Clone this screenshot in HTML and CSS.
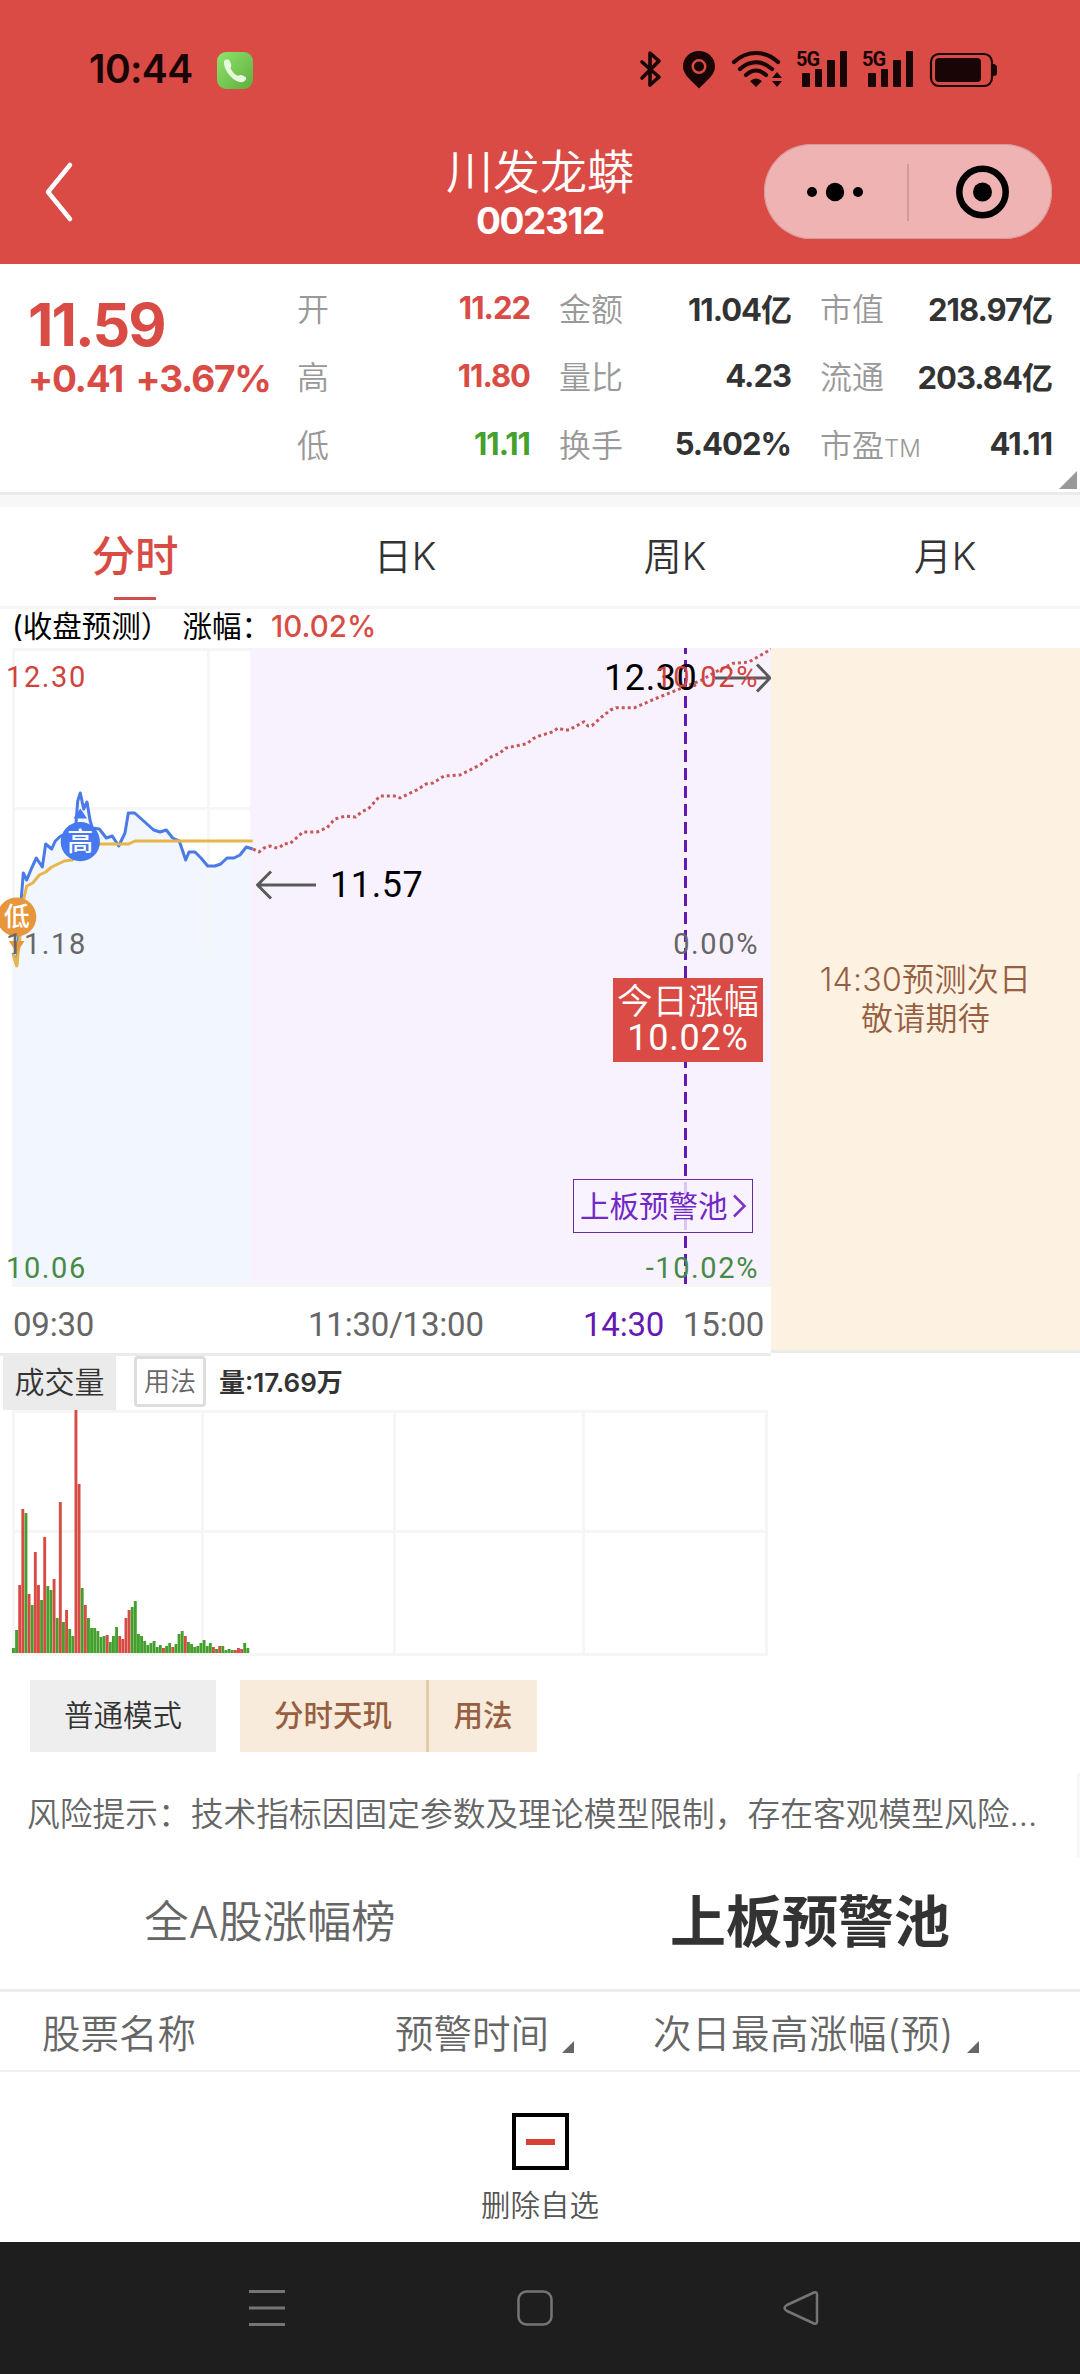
FILE: index.html
```html
<!DOCTYPE html>
<html lang="zh-CN">
<head>
    <meta charset="UTF-8">
    <meta name="viewport" content="width=device-width, initial-scale=1.0">
    <title>川发龙蟒 002312</title>
    <link rel="stylesheet" href="styles.css">
</head>
<body>
    <header class="header">
        <div class="status-bar">
            <span class="clock">10:44</span>
            <svg class="phone-icon" width="37" height="37" viewBox="0 0 37 37">
                <defs>
                    <linearGradient id="phoneBg" x1="0" y1="0" x2="1" y2="1">
                        <stop offset="0" stop-color="#8fe36b"/>
                        <stop offset="1" stop-color="#5fae3f"/>
                    </linearGradient>
                </defs>
                <rect width="36" height="37" rx="9" fill="url(#phoneBg)"/>
                <path d="M7 9.500c1-3 5-3 6 0 1 2.500 2 4 .5 6.500 1.500 4 4.500 6.500 7.500 8 2-1.500 4.500-1 6.500.5 2 .5 2 2 1 3.500-2 3-6 2.500-9 1C13 25.500 6.500 17 7 9.500z" fill="#e6f9df"/>
            </svg>
            <svg class="status-icons" width="360" height="40" viewBox="0 0 360 40" fill="#190505">
                <path d="M2 12l17 15-9 8V3l9 8L2 28" transform="translate(0 1)" fill="none" stroke="#190505" stroke-width="3.6" stroke-linejoin="round" stroke-linecap="round"/>
                <path fill-rule="evenodd" d="M59 2c9 0 16 6.500 16 15.500C75 26 67 31 59 39.500 51 31 43 26 43 17.500 43 8.500 50 2 59 2zm0 8a7.500 7.500 0 1 0 0 15 7.500 7.500 0 0 0 0-15z"/>
                <circle cx="59" cy="17.500" r="5"/>
                <g fill="none" stroke="#190505" stroke-width="4.200" stroke-linecap="round">
                    <path d="M94 13c13-12 31-12 44 0M100 20c10-9 22-9 32 0M106 26c7-6 13-6 20 0"/>
                </g>
                <path d="M110 32q6-5 12 0l-6 6zM132 29l5-6 5 6zM132 32h10l-5 6z"/>
                <g id="sig">
                    <text x="156" y="17" class="net">5G</text>
                    <rect x="162" y="24" width="8" height="14" rx="1"/>
                    <rect x="175" y="20" width="7" height="18" rx="1"/>
                    <rect x="187" y="11" width="8" height="27" rx="1"/>
                    <rect x="200" y="2" width="7" height="36" rx="1"/>
                </g>
                <use href="#sig" x="66"/>
                <rect x="291" y="5" width="61" height="32" rx="8" fill="none" stroke="#190505" stroke-width="2.200"/>
                <rect x="295" y="9" width="46" height="24" rx="4"/>
                <path d="M353 15c3 0 4 2 4 3v6c0 2-1 3-4 3z"/>
            </svg>
        </div>
        <div class="nav-bar">
            <svg class="back" width="40" height="64" viewBox="0 0 40 64" fill="none" stroke="#fff" stroke-width="4.500" stroke-linecap="round" stroke-linejoin="round">
                <path d="M30 5L8 32l22 27"/>
            </svg>
            <div class="title">
                <div class="stock-name">川发龙蟒</div>
                <div class="stock-code">002312</div>
            </div>
            <div class="capsule">
                <svg width="288" height="95" viewBox="0 0 288 95">
                    <circle cx="48" cy="48" r="5"/>
                    <circle cx="71" cy="48" r="9.200"/>
                    <circle cx="94" cy="48" r="5"/>
                    <path d="M144 20v57" stroke="#000" stroke-opacity=".17" stroke-width="1.500"/>
                    <circle cx="218.500" cy="48" r="23.200" fill="none" stroke="#000" stroke-width="6.500"/>
                    <circle cx="218.500" cy="48" r="9.500"/>
                </svg>
            </div>
        </div>
    </header>

    <section class="quote">
        <div class="price-box">
            <div class="price">11.59</div>
            <div class="change">+0.41 +3.67%</div>
        </div>
        <div class="stats">
            <div class="stat"><span>开</span><b class="up">11.22</b></div>
            <div class="stat"><span>金额</span><b>11.04亿</b></div>
            <div class="stat"><span>市值</span><b>218.97亿</b></div>
            <div class="stat"><span>高</span><b class="up">11.80</b></div>
            <div class="stat"><span>量比</span><b>4.23</b></div>
            <div class="stat"><span>流通</span><b>203.84亿</b></div>
            <div class="stat"><span>低</span><b class="down">11.11</b></div>
            <div class="stat"><span>换手</span><b>5.402%</b></div>
            <div class="stat"><span>市盈<small>TM</small></span><b>41.11</b></div>
        </div>
        <i class="corner"></i>
    </section>

    <nav class="tabs">
        <a class="tab active">分时</a>
        <a class="tab">日K</a>
        <a class="tab">周K</a>
        <a class="tab">月K</a>
    </nav>

    <div class="forecast">(收盘预测） 涨幅：<span>10.02%</span></div>

    <section class="chart-row">
        <div class="chart-col">
            <div class="chart">
                <svg class="plot" width="771" height="639" viewBox="0 0 771 639">
                    <path d="M13 306l3.700 11 1.800-25 2.800-42 2-25 3.400 7 5-12 4.600-10 6 9 3.400-23 6 5 3.600-8 5.400-5 9.300-2 6-11 1.700-22 2.600-8 3.400 16 3.300-7 3 18 2.300 8 7 1 7 9 6-2 6.400 10 6.300-13 3.300-20h6.400l19 17 6.300 2 6.300-2 6.400 8 6.600 3 6.400 19 3.300-8h6l6 6 6.700 8h7.300l5.700-2 6.300-6h7l6-3 6.300-8 3.700 1V636H13z" fill="#f1f6ff"/>
                    <g stroke="#f6f6f6" stroke-width="3">
                        <path d="M12 1.500h238M12 160.500h238M13.500 0v639M208.500 0v639" />
                    </g>
                    <path d="M12 306h238v330H12z" fill="#f1f6ff" fill-opacity=".75"/>
                    <rect x="250" width="521" height="636" fill="#f8f2ff"/>
                    <path d="M12 637.500h759" stroke="#f6f6f6" stroke-width="3"/>
                    <path d="M685.500 0v636" stroke="#6418b4" stroke-width="3" stroke-dasharray="12 6" stroke-dashoffset="6"/>
                    <g fill="none" stroke-width="3" stroke-linejoin="round">
                        <polyline stroke="#4a7ae6" points="13,305 16.700,317 18.500,292 21.300,250 23.300,225 26.700,232 31.700,220 36.300,210 42.300,219 45.700,196 51.700,201 55.300,193 60.700,188 70,186 76,175 77.700,153 80.300,145 83.700,161 87,154 90,172 92.300,180 99.300,181 106.300,190 112.300,188 118.700,198 125,185 128.300,165 134.700,165 153.700,182 160,184 166.300,182 172.700,190 179.300,193 185.700,212 189,204 195,204 201,210 207.700,218 215,218 220.700,216 227,210 234,210 240,207 246.300,199 252.700,201"/>
                        <polyline stroke="#e8b54a" points="13,306 16.700,318 20,289 24,250 26.700,238 32.700,235 39.300,227 45.700,224 51.700,219 64.300,213 72,212 90,198 100,196 128.700,196 135,193 252.700,193"/>
                        <polyline stroke="#c65757" stroke-dasharray="3 3" points="253,201 259,204 264,200 270,198 275.500,199.700 279.600,199.700 284,195.700 290,195.700 303,184 317,184 327,179.700 334.700,171 339,170 345.400,168 355.400,169 362,163.700 368.500,160.700 380,148 396,148 400,150 416.700,142 426,136 433,135 444,128 460,127 480,117 491,109 499,105.700 506,100 527,95.700 533,90.700 539,88 553,83.700 558,80 564,82 569,82 584,73.700 588,78 592,77.700 602,68.700 610.600,62 616,59.700 634.700,59.700 657,50 684.600,39 702,32 714,24.700 733,15.300 749,14 771,1.300"/>
                        <path stroke="#5a5a5a" d="M316 237h-59M271 223.500L257.500 237l13.500 13.500M715 30h55M757 16.500L770 30l-13 13.500"/>
                    </g>
                    <path d="M73.500 170.500l6.800-10 6.800 10z" fill="#4678f0"/>
                    <circle cx="80.300" cy="193.700" r="19.600" fill="#4678f0"/>
                    <path d="M9 293h15.500L16.700 305z" fill="#e8963c"/>
                    <circle cx="16.700" cy="269" r="19.600" fill="#e8963c"/>
                    <text class="mark" x="80.300" y="203">高</text>
                    <text class="mark" x="16.700" y="278">低</text>
                </svg>
                <span class="axis l1 up">12.30</span>
                <span class="axis l2">11.18</span>
                <span class="axis l3 green">10.06</span>
                <span class="tip t1">12.30</span>
                <span class="tip t2">11.57</span>
                <span class="axis r1 up">10.02%</span>
                <span class="axis r2">0.00%</span>
                <span class="axis r3 green">-10.02%</span>
                <div class="today">今日涨幅<br><span>10.02%</span></div>
                <a class="pool-link">上板预警池
                    <svg width="14" height="24" viewBox="0 0 14 24" fill="none" stroke="#7a35c8" stroke-width="2.500"><path d="M1 1.500l10.500 10.500L1 22.500"/></svg>
                </a>
            </div>
            <div class="times">
                <span>09:30</span>
                <span>11:30/13:00</span>
                <span class="violet">14:30</span>
                <span>15:00</span>
            </div>
        </div>
        <div class="next-day">14:30预测次日<br>敬请期待</div>
    </section>

    <section class="volume">
        <div class="volume-head">
            <span class="volume-tab">成交量</span>
            <span class="usage">用法</span>
            <b>量:17.69万</b>
        </div>
        <svg width="771" height="246" viewBox="0 0 771 246">
            <path d="M12 1.500h756M12 121.500h756M12 244.500h756M13.500 0v246M202.500 0v246M394.500 0v246M583.500 0v246M766.500 0v246" stroke="#f6f6f6" stroke-width="3" fill="none"/>
            <g id="bars"></g>
        </svg>
    </section>

    <div class="modes">
        <a class="mode">普通模式</a>
        <div class="mode-group">
            <a>分时天玑</a>
            <a>用法</a>
        </div>
    </div>

    <p class="risk">风险提示：技术指标因固定参数及理论模型限制，存在客观模型风险...</p>

    <div class="lists">
        <a>全A股涨幅榜</a>
        <a class="on">上板预警池</a>
    </div>

    <div class="table-head">
        <span>股票名称</span>
        <span>预警时间<i></i></span>
        <span class="rise">次日最高涨幅(预)<i></i></span>
    </div>

    <div class="remove">
        <div class="remove-icon"></div>
        删除自选
    </div>

    <footer class="system-nav">
        <svg width="1080" height="132" viewBox="0 0 1080 132" fill="none" stroke="#757575" stroke-width="3" stroke-linejoin="round">
            <path d="M249 49.500h36M249 66h36M249 82.500h36"/>
            <rect x="518.500" y="49.500" width="33" height="33" rx="8" stroke-width="2.500"/>
            <path d="M814 50.500L787 63q-5 3 0 6l27 12.500q3 1 3-2v-27q0-3-3-2z" stroke-width="2.500"/>
        </svg>
    </footer>

    <script>
        // minute volume, sign gives the colour: + red, - green
        const volumes = [-5, -23, 68, 144, -140, 59, -48, 101, 68, -53, 116, -67, -63, 74, -35, 151, -31, 43, -24, -17,
            243, 169, -65, 48, -35, -25, -25, -22, -16, -17, 18, -11, -17, -26, 17, 14, 35, 43, -46, -52,
            -19, -17, -12, -8, -10, -12, -6, -8, 5, -7, -10, 6, -9, -19, -22, 17, -11, -9, -6, -7,
            -10, -13, -7, -10, 6, -4, 7, -7, -3, -4, -3, 3, 5, 4, -10, -5];
        const step = 3.125;
        document.getElementById('bars').innerHTML = volumes.map((v, i) => {
            const h = Math.abs(v);
            return `<rect x="${12 + i * step}" y="${243 - h}" width="2.9" height="${h}" fill="${v > 0 ? '#d84a44' : '#43a02c'}"/>`;
        }).join('');
    </script>
</body>
</html>
```
FILE: styles.css
```css
* {
    box-sizing: border-box;
}

body {
    margin: 0;
    width: 1080px;
    background: #fff;
    color: #333;
    font-family: Inter, "Noto Sans CJK SC", sans-serif;
    font-weight: 350;
}

/* Header */
.header {
    height: 264px;
    background: #da4b45;
}

.status-bar {
    height: 130px;
    padding: 49px 0 0 89px;
    display: flex;
    align-items: flex-start;
}

.clock {
    width: 128px;
    margin-top: -3px;
    font-size: 39px;
    line-height: 46px;
    font-weight: 600;
    letter-spacing: -.6px;
    color: #190505;
}

.phone-icon {
    margin-top: 3px;
}

.status-icons {
    margin-left: 386px;
    overflow: visible;
}

.net {
    font: bold 20px Roboto, sans-serif;
    letter-spacing: -1px;
}

.nav-bar {
    position: relative;
    display: flex;
    justify-content: space-between;
    padding: 14px 28px 0 40px;
}

.back {
    margin-top: 16px;
}

.title {
    position: absolute;
    left: 0;
    right: 0;
    top: 12px;
    text-align: center;
    color: #fff;
}

.stock-name {
    font-size: 47px;
    line-height: 60px;
}

.stock-code {
    font-size: 37px;
    line-height: 36px;
    font-weight: 700;
    letter-spacing: -1.4px;
    margin-top: 1px;
}

.capsule {
    width: 288px;
    height: 95px;
    border-radius: 48px;
    background: #eeb3b2;
    box-shadow: inset 0 0 0 1px #d49a97;
}

/* Quote */
.quote {
    position: relative;
    display: flex;
    height: 243px;
    padding: 0 28px;
    border-bottom: 12px solid #f7f7f7;
    box-shadow: inset 0 -3px #ebebeb;
}

.price-box {
    width: 269px;
    padding-top: 28px;
    color: #d94c45;
    font-weight: 700;
    white-space: nowrap;
}

.price {
    font-size: 59px;
    line-height: 66px;
    letter-spacing: -1.9px;
}

.change {
    font-size: 37px;
    line-height: 42px;
    letter-spacing: -1.2px;
    word-spacing: 5px;
}

.stats {
    flex: 1;
    display: grid;
    grid-template-columns: 233px 232px 232px;
    grid-auto-rows: 68px;
    column-gap: 29px;
    padding-top: 9px;
}

.stat {
    display: flex;
    justify-content: space-between;
    align-items: center;
    white-space: nowrap;
}

.stat span {
    color: #999;
    font-size: 32px;
}

.stat small {
    font-size: 24px;
}

.stat b {
    font-size: 31px;
    font-weight: 700;
    letter-spacing: -1px;
}

.stat b.up, .up {
    color: #d94c45;
}

.stat b.down {
    color: #46a02d;
}

.corner {
    position: absolute;
    right: 3px;
    bottom: 6px;
    border-left: 18px solid transparent;
    border-bottom: 18px solid #999;
}

/* Period tabs */
.tabs {
    display: flex;
    height: 102px;
    border-bottom: 3px solid #f5f5f5;
}

.tab {
    flex: 1;
    font-size: 38px;
    line-height: 98px;
    text-align: center;
}

.tab.active {
    color: #d94c45;
    font-size: 43.5px;
    font-weight: 500;
    background: linear-gradient(#d2504c, #d2504c) 50% 90px / 42px 3px no-repeat;
}

.forecast {
    height: 39px;
    padding-left: 12px;
    font-size: 29.5px;
    line-height: 35px;
    font-weight: 400;
    word-spacing: 4px;
    color: #000;
    white-space: pre;
}

.forecast span {
    color: #d94c45;
    font-weight: 500;
}

/* Chart */
.chart-row {
    display: flex;
    height: 708px;
}

.chart-col {
    width: 771px;
    border-bottom: 3px solid #ebebeb;
}

.chart {
    position: relative;
    height: 639px;
}

.plot {
    display: block;
}

.mark {
    font-size: 26px;
    font-weight: 500;
    fill: #fff;
    text-anchor: middle;
}

.axis, .tip {
    position: absolute;
    font-family: Roboto, sans-serif;
    font-weight: 400;
}

.axis {
    font-size: 29px;
    line-height: 34px;
    letter-spacing: 1.6px;
    color: #666;
}

.axis.up {
    color: #d0433d;
}

.axis.green {
    color: #468a46;
}

.l1, .l2, .l3 {
    left: 6px;
}

.r1, .r2, .r3 {
    right: 12px;
}

.l1, .r1 {
    top: 12px;
}

.l2, .r2 {
    top: 279px;
}

.l3, .r3 {
    top: 603px;
}

.tip {
    font-size: 36px;
    line-height: 42px;
    letter-spacing: .6px;
    color: #000;
}

.t1 {
    left: 604px;
    top: 9px;
}

.t2 {
    left: 330px;
    top: 216px;
}

.today {
    position: absolute;
    left: 613px;
    top: 330px;
    width: 150px;
    height: 84px;
    padding-top: 6px;
    background: #da4b45;
    color: #fff;
    font-size: 35.5px;
    line-height: 36px;
    text-align: center;
    white-space: nowrap;
}

.today span {
    font-family: Roboto, sans-serif;
    font-weight: 400;
    font-size: 36px;
    letter-spacing: .8px;
}

.pool-link {
    position: absolute;
    left: 573px;
    top: 531px;
    display: flex;
    align-items: center;
    gap: 5px;
    width: 180px;
    height: 54px;
    padding-left: 6px;
    border: 1.5px solid #6a2aa8;
    background: rgba(248, 242, 255, .8);
    color: #7228c4;
    font-size: 29.5px;
    font-weight: 400;
    line-height: 50px;
    white-space: nowrap;
}

.times {
    display: grid;
    grid-template-columns: 295px 275px 100px auto;
    padding: 16px 0 0 13px;
    font-family: Roboto, sans-serif;
    font-size: 33px;
    line-height: 44px;
    font-weight: 400;
    letter-spacing: -.2px;
    color: #666;
}

.violet {
    color: #6418b4;
}

.next-day {
    flex: 1;
    height: 705px;
    padding-top: 312px;
    border-bottom: 3px solid #ebebeb;
    background: #fdf2e1;
    color: #965f41;
    font-size: 32px;
    line-height: 39px;
    letter-spacing: .3px;
    text-align: center;
}

/* Volume */
.volume-head {
    display: flex;
    height: 54px;
    padding-left: 3px;
}

.volume-tab {
    width: 113px;
    background: #ebebeb;
    font-size: 30px;
    line-height: 52px;
    text-align: center;
}

.usage {
    width: 72px;
    height: 51px;
    margin: 0 13px 0 18px;
    border: 3px solid #ddd;
    border-radius: 4px;
    color: #666;
    font-size: 26px;
    line-height: 46px;
    text-align: center;
}

.volume-head b {
    font-size: 26px;
    line-height: 54px;
    font-weight: 600;
}

.volume svg {
    display: block;
}

/* Mode buttons */
.modes {
    display: flex;
    gap: 24px;
    padding: 24px 30px 0;
    font-size: 29.5px;
    line-height: 70px;
    text-align: center;
}

.mode {
    width: 186px;
    height: 72px;
    background: #eee;
}

.mode-group {
    display: flex;
    height: 72px;
    background: #f8ebdb;
    color: #965f41;
    font-weight: 500;
}

.mode-group a {
    width: 186px;
}

.mode-group a + a {
    width: 111px;
    border-left: 3px solid #e2cbab;
}

.risk {
    height: 84px;
    margin: 21px 0 0;
    padding-left: 27px;
    border-right: 3px solid #f8f8f8;
    color: #666;
    font-size: 32.75px;
    line-height: 82px;
    white-space: nowrap;
}

.lists {
    display: flex;
    height: 135px;
    border-bottom: 3px solid #ebecf1;
}

.lists a {
    flex: 1;
    color: #666;
    font-size: 44.3px;
    line-height: 131px;
    text-align: center;
}

.lists a.on {
    color: #333;
    font-size: 56px;
    font-weight: 700;
}

.table-head {
    display: grid;
    grid-template-columns: 353px 258px 1fr;
    height: 80px;
    padding-left: 42px;
    border-bottom: 2px solid #f0f0f0;
    color: #666;
    font-size: 38.5px;
    line-height: 85px;
    white-space: nowrap;
}

.table-head .rise {
    letter-spacing: .5px;
}

.table-head i {
    display: inline-block;
    margin-left: 13px;
    border-left: 12px solid transparent;
    border-bottom: 12px solid #666;
    vertical-align: -5px;
}

.remove {
    height: 170px;
    padding-top: 41px;
    color: #555;
    font-size: 29.5px;
    line-height: 70px;
    text-align: center;
}

.remove-icon {
    width: 57px;
    height: 57px;
    margin: 0 auto;
    border: 4px solid #000;
    background: linear-gradient(#d94035, #d94035) 50% 50% / 29px 6px no-repeat;
}

.system-nav {
    height: 132px;
    background: #1e1e1e;
}

.system-nav svg {
    display: block;
}
```
